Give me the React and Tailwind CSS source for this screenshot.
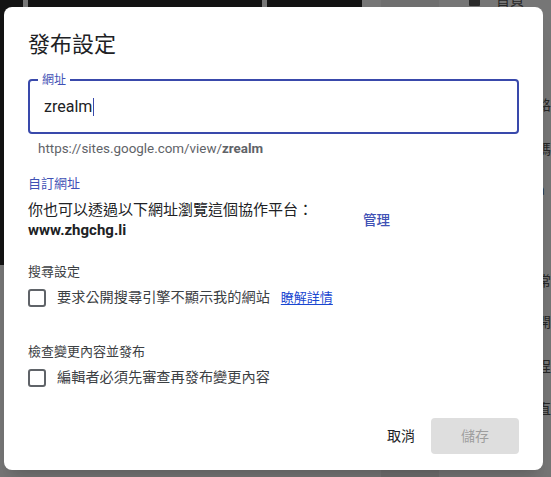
import React from 'react';

const sideChars = [
  { ch: '路', mt: 'mt-[88px]' },
  { ch: '碼', mt: 'mt-[28px]' },
  { ch: 'a', mt: 'mt-[25px]' },
  { ch: '常', mt: 'mt-[75px]' },
  { ch: '開', mt: 'mt-[25px]' },
  { ch: '程', mt: 'mt-[28px]' },
  { ch: '直', mt: 'mt-[27px]' },
];

function Checkbox() {
  return <div className="w-[18px] h-[18px] shrink-0 border-2 border-[#5f6368] rounded-[3px]"></div>;
}

export default function App() {
  return (
    <div className="relative w-full h-[477px] overflow-hidden bg-[#767676] font-[Roboto,'Noto_Sans_CJK_TC',sans-serif]">
      {/* dimmed page behind the dialog */}
      <div className="flex h-full">
        <div className="flex gap-[5px] w-[365px] h-[265px]">
          <div className="w-[23px] bg-[#131313]"></div>
          <div className="w-[234px] bg-[#131313]"></div>
          <div className="flex-1 bg-[#131313]"></div>
        </div>
        <div className="w-[19px]"></div>
        <div className="w-[59px] bg-[#6f6f6f]"></div>
        <div className="flex-1 flex flex-col">
          <div className="flex items-center gap-[16px] pl-[30px] -mt-[9px] h-[18px] text-[#262626] text-[14px]">
            <div className="w-[11px] h-[11px] bg-[#2a2a2a] rounded-[1px]"></div>
            <span>首頁</span>
          </div>
          <div className="flex flex-col pl-[98px] text-[14px] leading-[16px] text-[#262626]">
            {sideChars.map((c, i) => (
              <div key={i} className={c.mt}>{c.ch}</div>
            ))}
          </div>
        </div>
      </div>

      {/* dialog */}
      <div className="absolute left-[4px] top-[7px] w-[539px] h-[463px] bg-white rounded-[8px] shadow-xl px-6 pt-6 pb-4 flex flex-col">
        <h2 className="text-[22px] leading-[28px] text-[#202124]">發布設定</h2>

        <div className="relative mt-[20px] h-[55px] border-2 border-[#3949ab] rounded-[4px] flex items-center pl-[12px]">
          <span className="absolute left-[8px] top-[-9px] px-[4px] bg-white text-[12px] leading-[16px] text-[#3f51b5]">網址</span>
          <span className="text-[16px] text-[#202124] pl-[2px]">zrealm</span>
          <span className="w-px h-[18px] bg-[#3949ab] ml-[1px]"></span>
        </div>

        <div className="mt-[7px] pl-[10px] text-[13.4px] leading-[16px] text-[#5f6368]">
          https://sites.google.com/view/<span className="font-bold">zrealm</span>
        </div>

        <div className="mt-[19px] text-[13px] leading-[16px] text-[#3f51b5]">自訂網址</div>

        <div className="mt-[8px] flex items-center">
          <div className="w-[335px] text-[15px] leading-[20px] text-[#202124]">
            <div>你也可以透過以下網址瀏覽這個協作平台：</div>
            <div className="font-bold">www.zhgchg.li</div>
          </div>
          <span className="text-[13.5px] font-medium text-[#3f51b5]">管理</span>
        </div>

        <div className="mt-[24px] text-[13px] leading-[16px] text-[#3c4043]">搜尋設定</div>
        <div className="mt-[8px] flex items-center h-[20px] text-[14.2px] text-[#3c4043]">
          <Checkbox />
          <span className="ml-[11px]">要求公開搜尋引擎不顯示我的網站</span>
          <span className="ml-[11px] text-[13px] text-[#1a47d1] underline underline-offset-2">瞭解詳情</span>
        </div>

        <div className="mt-[36px] text-[13px] leading-[16px] text-[#3c4043]">檢查變更內容並發布</div>
        <div className="mt-[8px] flex items-center h-[20px] text-[14.2px] text-[#3c4043]">
          <Checkbox />
          <span className="ml-[11px]">編輯者必須先審查再發布變更內容</span>
        </div>

        <div className="mt-auto flex justify-end items-center">
          <button className="h-9 px-4 text-[14px] text-[#202124]">取消</button>
          <button className="h-9 w-[88px] rounded-[4px] bg-[#dedede] text-[14px] text-[#9e9e9e]">儲存</button>
        </div>
      </div>
    </div>
  );
}
